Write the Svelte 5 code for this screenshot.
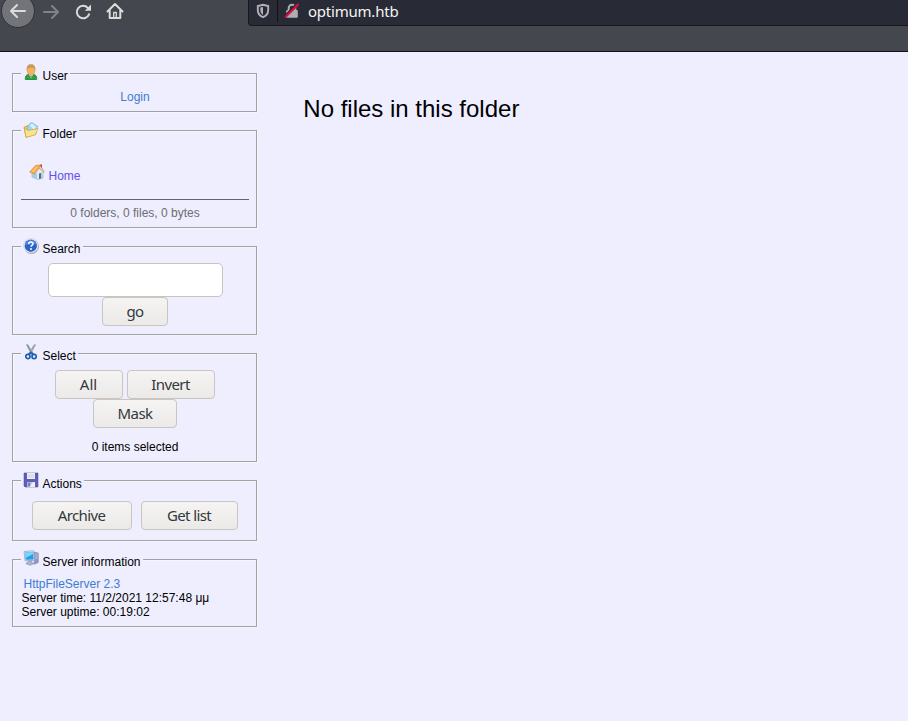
<script>
  const summary = '0 folders, 0 files, 0 bytes';
</script>

{#snippet legend(name, label)}
  <div class="legend {name}">
    <svg class="icon" viewBox="0 0 16 16" width="16" height="16">
      {#if name === 'user'}
        <path d="M2.300 15.500c-.4-3 .6-4.600 3.400-5.200h4.600c2.800.6 3.800 2.200 3.400 5.200Q8 16.500 2.300 15.500Z" fill="#32a044" stroke="#1c7c31" stroke-width=".7" />
        <path d="m5.800 10 2.200 4.500L10.200 10Z" fill="#eaf7e5" />
        <path d="m8 11-.8 1.200.8 2.800.8-2.800Z" fill="#55a35e" />
        <ellipse cx="8" cy="6.300" rx="4" ry="4.700" fill="#f9b05c" stroke="#c58a42" stroke-width=".5" />
        <path d="M3.700 6C3.400 2.200 5 .3 8 .3s4.600 1.900 4.300 5.700C11.100 3.800 9.500 3.600 8 3.800 6.200 3.700 4.900 4 3.700 6Z" fill="#c59a58" />
      {:else if name === 'folder'}
        <path d="M1 5.200 5 3.500l1.500 1L12 4l1 8-10 3.300Z" fill="#e8c95a" stroke="#b69437" stroke-width=".7" />
        <path d="m4.500 4 4-3.700L15 4.500 11 10l-6-1Z" fill="#9fd5f5" stroke="#76add2" stroke-width=".6" />
        <path d="m7 3.500 2-2L13 5l-2 3Z" fill="#d5f2ff" />
        <path d="m1.300 6.500 4.200 2L15 6.500 12.200 13 3 15.300Z" fill="#fae58c" stroke="#c7a34a" stroke-width=".7" />
      {:else if name === 'search'}
        <circle cx="8.400" cy="8.400" r="7.500" fill="#a5a8ac" />
        <circle cx="7.800" cy="7.700" r="7.300" fill="#f1f2f4" stroke="#bfc3cb" stroke-width=".5" />
        <circle cx="7.800" cy="7.700" r="6.200" fill="#2864ca" />
        <path d="M2.200 7C2.700 3.500 5.200 2 8 2s5 1.500 5.500 4Z" fill="#6d9be3" opacity=".6" />
        <path d="M5.700 6C5.700 3.300 10 3.300 10 5.800c0 1.500-2 1.600-2 3" fill="none" stroke="#fff" stroke-width="1.500" />
        <circle cx="8" cy="11" r="1" fill="#fff" />
      {:else if name === 'select'}
        <path d="m3.500.8 1.200-.2L10.500 10 9 11Z" fill="#8b96a4" stroke="#727e8e" stroke-width=".5" />
        <path d="m12.500.8-1.200-.2L5.500 10 7 11Z" fill="#a5afbb" stroke="#778391" stroke-width=".5" />
        <path d="m5.500 10.500 2.500-2 2.500 2" fill="none" stroke="#2866af" stroke-width="1.800" />
        <ellipse cx="4.900" cy="12.500" rx="2.100" ry="2.100" fill="none" stroke="#1d5eb2" stroke-width="1.700" />
        <ellipse cx="11.100" cy="12.500" rx="2.100" ry="2.100" fill="none" stroke="#1d5eb2" stroke-width="1.700" />
      {:else if name === 'actions'}
        <path d="M1 1h14v14H2l-1-1Z" fill="#5e5ebc" stroke="#44449b" stroke-width=".5" />
        <path d="M4 1h8v6H4Z" fill="#eeeef0" />
        <path d="M4.500 3h7M4.500 5h7" stroke="#d0d0d4" />
        <path d="M4 10h8v5H4Z" fill="#aeb4c4" />
        <path d="m9 10.500 3-.5v5H7Z" fill="#f0f0f2" />
        <path d="M5 11h2v3H5Z" fill="#7a7eae" />
      {:else}
        <path d="m10.500 2 4.800 1v9.500l-3.800 1.700Z" fill="#9098c4" stroke="#7078a8" stroke-width=".5" />
        <path d="m12.500 4 2 .4M12.500 6l2 .2M12.500 8h2" stroke="#dbe0f5" stroke-width=".7" />
        <path d="M1 1.500 10.500.7l1.300 9.800-9.800.3Z" fill="#d3ddec" stroke="#8193bd" stroke-width=".6" />
        <path d="m2 2.600 7.700-.7 1 7.500-7.900.3Z" fill="#259ce8" />
        <path d="m2 2.600 7.700-.7.4 2-7.500 4Z" fill="#7bd5fb" />
        <path d="m5.500 11 3-.2.6 2 2.400.8-4.500 1.700-4.200-1.600Z" fill="#adb4d1" stroke="#7780aa" stroke-width=".5" />
      {/if}
    </svg>
    <span>{label}</span>
  </div>
{/snippet}

<div class="page">
  <header>
    <nav>
      <span class="back">
        <svg width="18" height="18" viewBox="0 0 18 18"><path d="M16 9H2M8 3 2 9l6 6" /></svg>
      </span>
      <svg class="forward" width="18" height="18" viewBox="0 0 18 18"><path d="M2 9h14M10 3l6 6-6 6" /></svg>
      <svg class="reload" width="18" height="18" viewBox="0 0 18 18"><path d="M15 11.300A6.300 6.300 0 1 1 13.800 4.800" /><path class="fill" d="M17 1.500v6.200h-6.200Z" /></svg>
      <svg class="home" width="18" height="18" viewBox="0 0 18 18"><path d="m1.500 9.500 7.500-7.500 7.500 7.500M3.700 8.500V16h10.600V8.500" /><path class="door" d="M7.700 15.500v-5h2.600v5" /></svg>
    </nav>
    <div class="address">
      <svg class="shield" width="14" height="16" viewBox="0 0 14 16"><path d="M7 1.800 12.200 3v4c0 3.500-2.200 6-5.200 7.200C4 13 1.800 10.500 1.800 7V3Z" fill="none" stroke="#b1b1b5" stroke-width="1.900" /><path d="M7 4v8C5.200 10.800 4.300 9.200 4.300 7V4.600Z" fill="#b1b1b5" /></svg>
      <i></i>
      <svg class="lock" width="16" height="16" viewBox="0 0 16 16"><path d="M4.700 8V5a3.300 3.300 0 0 1 6.600 0v3" fill="none" stroke="#afafb2" stroke-width="2" /><rect x="2.200" y="7" width="11.600" height="7.800" rx="1" fill="#afafb2" /><path d="M1 13.500 14 .5" stroke="#282a36" stroke-width="3" /><path d="M1.200 14.400 14.600 1" stroke="#ed0b3c" stroke-width="2" /></svg>
      <span>optimum.htb</span>
    </div>
  </header>

  <div class="body">
    <aside>
      <section class="user-panel">
        {@render legend('user', 'User')}
        <a class="login">Login</a>
      </section>
      <section class="folder-panel">
        {@render legend('folder', 'Folder')}
        <div class="crumb">
          <svg width="16" height="16" viewBox="0 0 16 16">
            <path d="M3 7 9 3l5 5v6l-5 1.500L3 13Z" fill="#d9edfb" stroke="#8aa4bd" stroke-width=".6" />
            <path d="m3 7 5 2.500v5.800L3 13Z" fill="#a9c9e5" />
            <path d="M10 9.500 12.300 9v5.200l-2.300.7Z" fill="#526b91" />
            <path d="M11 .5h2v4h-2Z" fill="#c63b30" />
            <path d="M.6 8 6.500 1.400 11 1l4.300 7-1.200.6L10.300 4 5.400 10Z" fill="#f5a042" stroke="#d5792d" stroke-width=".5" />
            <path d="m2 7.500 5-5 2.500-.2L5 8.500Z" fill="#ffc16c" />
            <path d="m10.300 4 1-1.600 3.400 5.400-.8.6Z" fill="#c7d6e6" />
          </svg>
          <a>Home</a>
        </div>
        <div class="summary">{summary}</div>
      </section>
      <section class="search-panel">
        {@render legend('search', 'Search')}
        <input aria-label="Search" />
        <button style:width="66px">go</button>
      </section>
      <section class="select-panel">
        {@render legend('select', 'Select')}
        <div class="row"><button class="all" style:width="68px">All</button><button style:width="88px">Invert</button></div>
        <button style:width="84px">Mask</button>
        <div class="count">0 items selected</div>
      </section>
      <section class="actions-panel">
        {@render legend('actions', 'Actions')}
        <div class="row"><button style:width="100px">Archive</button><button style:width="97px">Get list</button></div>
      </section>
      <section class="server-panel">
        {@render legend('server', 'Server information')}
        <div class="info">
          <a>HttpFileServer 2.3</a>
          <div>Server time: 11/2/2021 12:57:48 μμ</div>
          <div>Server uptime: 00:19:02</div>
        </div>
      </section>
    </aside>
    <main>No files in this folder</main>
  </div>
</div>

<style>
  :global(body) { margin: 0; background: #eef; }
  .page { width: 908px; height: 721px; overflow: hidden; background: #eef; color: #000; font: 12px/14px "Liberation Sans", Arial, sans-serif; }
  .page, .page * { box-sizing: border-box; }
  svg { display: block; flex: none; }
  header { display: flex; height: 52px; background: #44474d; border-bottom: 1px solid #111118; }
  nav { display: flex; width: 248px; height: 23px; align-items: center; flex: none; }
  nav svg { fill: none; stroke: #dcdcda; stroke-width: 2; stroke-linecap: round; stroke-linejoin: round; }
  .back { display: flex; flex: none; width: 34px; height: 34px; margin-left: 1px; margin-top: -1px; border-radius: 50%; border: 1px solid #303238; background: #737479; align-items: center; justify-content: center; }
  nav .forward { margin-left: 7px; stroke: #828388; }
  .reload { margin-left: 14px; }
  nav .reload .fill { fill: #dcdcda; stroke: none; }
  .home { margin-left: 14px; margin-top: -1px; }
  .home .door { stroke-width: 1.3; }
  .address { display: flex; flex: 1; height: 26px; align-items: center; padding: 0 0 3px 7px; background: #282a36; border-left: 1px solid #17181e; border-bottom: 1px solid #17181e; border-radius: 0 0 0 4px; color: #f4f4f3; font: 15px/22px "Noto Sans", sans-serif; }
  .address i { width: 1px; height: 22px; margin: 0 6px 0 7px; background: #101116; }
  .address span { margin-left: 8px; letter-spacing: -.22px; }
  .body { display: flex; padding: 21px 0 0 12px; }
  aside { display: flex; flex-direction: column; gap: 18px; width: 245px; flex: none; }
  section { display: flex; flex-direction: column; align-items: center; padding-left: 1px; border: 1px solid #a2a1a5; box-shadow: 1px 1px #f6f6ff, inset 1px 1px #f6f6ff; }
  .user-panel { height: 39px; }
  .folder-panel { height: 98px; }
  .search-panel { height: 89px; }
  .select-panel { height: 109px; }
  .actions-panel { height: 61px; }
  .server-panel { height: 68px; }
  .legend { display: flex; flex: none; align-self: flex-start; height: 20px; margin: -11px 0 -9px 7px; padding: 0 2px; background: #eef; }
  .legend span { padding: 6px 0 0 3.500px; line-height: 14px; }
  .icon { margin-top: 1px; }
  .folder .icon, .search .icon, .actions .icon { margin-top: 2px; }
  .folder span, .actions span { padding-top: 7px; }
  a { color: #3d7cd3; text-decoration: none; }
  .login { margin-top: 16px; }
  .crumb { display: flex; align-self: flex-start; gap: 3.500px; margin: 33px 0 0 15px; }
  .crumb a { color: #5e50ee; padding-top: 5px; }
  .summary { width: 228px; margin-top: 16px; padding-top: 6px; border-top: 1px solid #63636a; color: #6d6d70; text-align: center; }
  input { width: 175px; height: 34px; margin-top: 16px; padding: 0; border: 1px solid #c9c4c0; border-radius: 5px; background: #fff; flex: none; }
  button { height: 29px; padding: 0 0 1px; border: 1px solid #c9c5c0; border-radius: 4px; background: linear-gradient(#f5f4f3, #ebeae8); color: #33383b; font: 15px/22px "Noto Sans", sans-serif; letter-spacing: -.6px; flex: none; }
  button.all { letter-spacing: 0; }
  .row { display: flex; gap: 4px; margin-left: -1px; }
  .select-panel .row { margin-top: 16px; }
  .count { margin-top: 12px; }
  .actions-panel .row { gap: 9px; margin-top: 20px; }
  .info { align-self: stretch; padding: 17px 0 0 7.500px; }
  .info a { display: block; margin-left: 2px; }
  main { padding: 22px 0 0 46.300px; font-size: 24px; line-height: 28px; }
</style>
